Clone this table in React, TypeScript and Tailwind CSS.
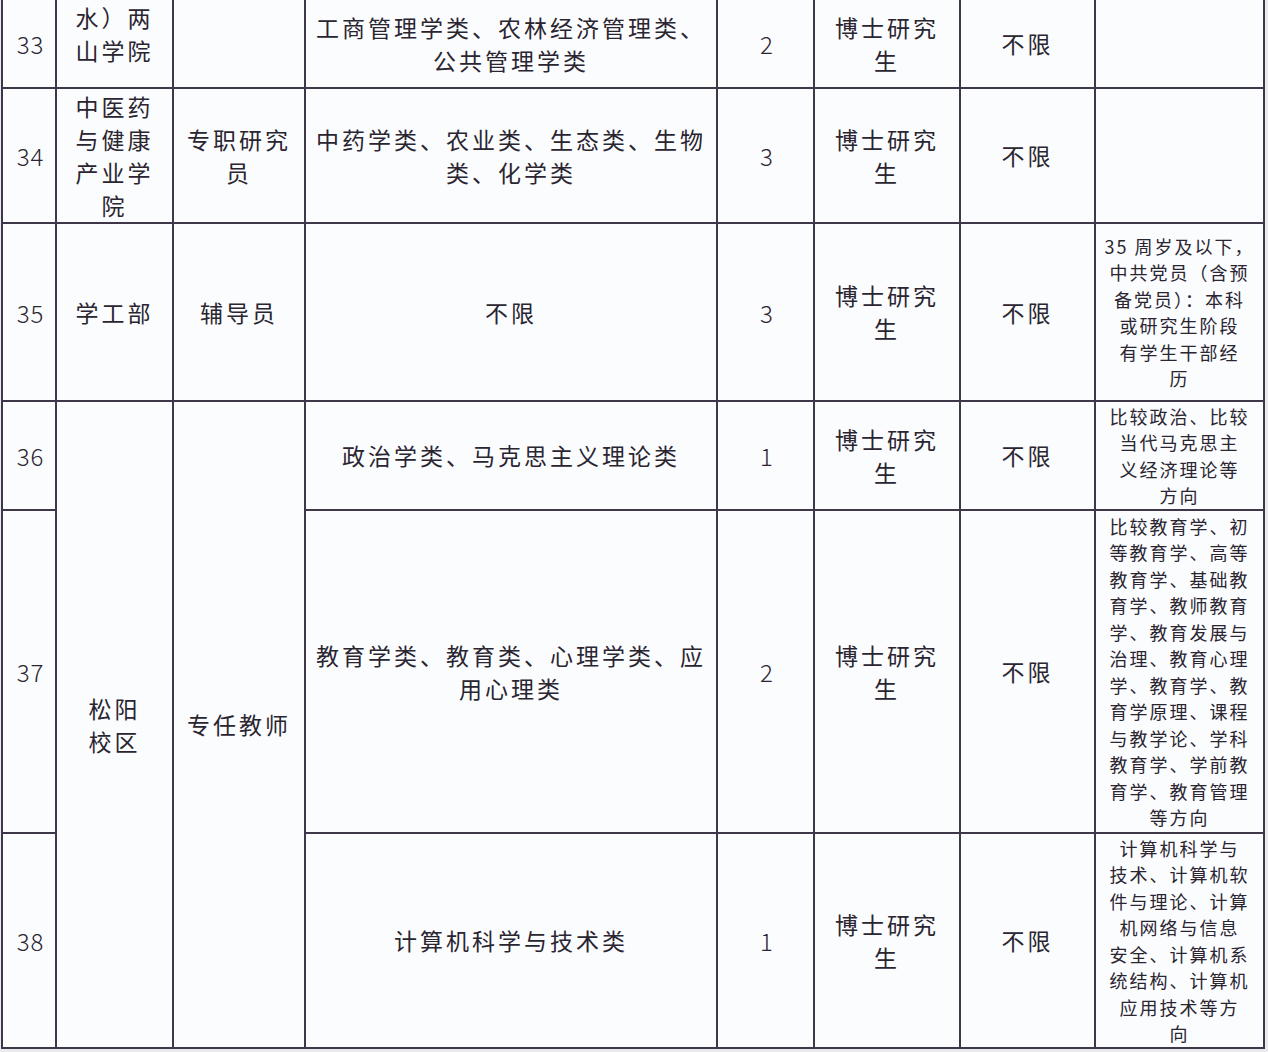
const FONT = '"Noto Sans CJK SC", "Noto Sans", sans-serif'

type Cell = {
  lines?: string[]
  rowSpan?: number
  note?: boolean
  num?: boolean
  shift?: string
}

type Row = { h: string; cells: Cell[] }

const BUSHI = ['博士研究', '生']

const rows: Row[] = [
  {
    h: 'h-[88px]',
    cells: [
      { lines: ['33'], num: true },
      { lines: ['水）两', '山学院'], shift: 'pb-[20px]' },
      { lines: [] },
      { lines: ['工商管理学类、农林经济管理类、', '公共管理学类'] },
      { lines: ['2'], num: true },
      { lines: BUSHI },
      { lines: ['不限'] },
      { lines: [] },
    ],
  },
  {
    h: 'h-[135px]',
    cells: [
      { lines: ['34'], num: true },
      { lines: ['中医药', '与健康', '产业学', '院'] },
      { lines: ['专职研究', '员'] },
      { lines: ['中药学类、农业类、生态类、生物', '类、化学类'] },
      { lines: ['3'], num: true },
      { lines: BUSHI },
      { lines: ['不限'] },
      { lines: [] },
    ],
  },
  {
    h: 'h-[178px]',
    cells: [
      { lines: ['35'], num: true },
      { lines: ['学工部'] },
      { lines: ['辅导员'] },
      { lines: ['不限'] },
      { lines: ['3'], num: true },
      { lines: BUSHI },
      { lines: ['不限'] },
      {
        note: true,
        lines: ['35 周岁及以下，', '中共党员（含预', '备党员）：本科', '或研究生阶段', '有学生干部经', '历'],
      },
    ],
  },
  {
    h: 'h-[109px]',
    cells: [
      { lines: ['36'], num: true },
      { lines: ['松阳', '校区'], rowSpan: 3 },
      { lines: ['专任教师'], rowSpan: 3 },
      { lines: ['政治学类、马克思主义理论类'] },
      { lines: ['1'], num: true },
      { lines: BUSHI },
      { lines: ['不限'] },
      { note: true, lines: ['比较政治、比较', '当代马克思主', '义经济理论等', '方向'] },
    ],
  },
  {
    h: 'h-[323px]',
    cells: [
      { lines: ['37'], num: true },
      { lines: ['教育学类、教育类、心理学类、应', '用心理类'] },
      { lines: ['2'], num: true },
      { lines: BUSHI },
      { lines: ['不限'] },
      {
        note: true,
        lines: [
          '比较教育学、初',
          '等教育学、高等',
          '教育学、基础教',
          '育学、教师教育',
          '学、教育发展与',
          '治理、教育心理',
          '学、教育学、教',
          '育学原理、课程',
          '与教学论、学科',
          '教育学、学前教',
          '育学、教育管理',
          '等方向',
        ],
      },
    ],
  },
  {
    h: 'h-[215px]',
    cells: [
      { lines: ['38'], num: true },
      { lines: ['计算机科学与技术类'] },
      { lines: ['1'], num: true },
      { lines: BUSHI },
      { lines: ['不限'] },
      {
        note: true,
        lines: [
          '计算机科学与',
          '技术、计算机软',
          '件与理论、计算',
          '机网络与信息',
          '安全、计算机系',
          '统结构、计算机',
          '应用技术等方',
          '向',
        ],
      },
    ],
  },
]

function TableCell({ cell, first }: { cell: Cell; first: boolean }) {
  const text = cell.note
    ? 'text-[18px] leading-[26.5px] tracking-[2px]'
    : cell.num
      ? 'text-[24px] leading-[33px] tracking-[1px] font-light pl-[3px]'
      : 'text-[23px] leading-[33px] tracking-[3px]'
  return (
    <td
      rowSpan={cell.rowSpan}
      className={`border-2 border-[#3e3749] p-0 text-center align-middle text-[#2a2530] ${first ? 'border-t-0' : ''} ${text}`}
    >
      <div className={cell.shift ?? ''}>
        {cell.lines?.map((l, i) => (
          <div key={i} className="whitespace-nowrap">
            {l}
          </div>
        ))}
      </div>
    </td>
  )
}

export default function App() {
  return (
    <div className="h-[1052px] w-[1268px] overflow-hidden bg-[#e9e9ee]" style={{ fontFamily: FONT }}>
      <table className="ml-[1px] table-fixed border-collapse bg-[#fbfcfe]">
        <colgroup>
          <col className="w-[54px]" />
          <col className="w-[117px]" />
          <col className="w-[132px]" />
          <col className="w-[412px]" />
          <col className="w-[97px]" />
          <col className="w-[146px]" />
          <col className="w-[135px]" />
          <col className="w-[169px]" />
        </colgroup>
        <tbody>
          {rows.map((r, i) => (
            <tr key={i} className={r.h}>
              {r.cells.map((c, j) => (
                <TableCell key={j} cell={c} first={i === 0} />
              ))}
            </tr>
          ))}
        </tbody>
      </table>
    </div>
  )
}
